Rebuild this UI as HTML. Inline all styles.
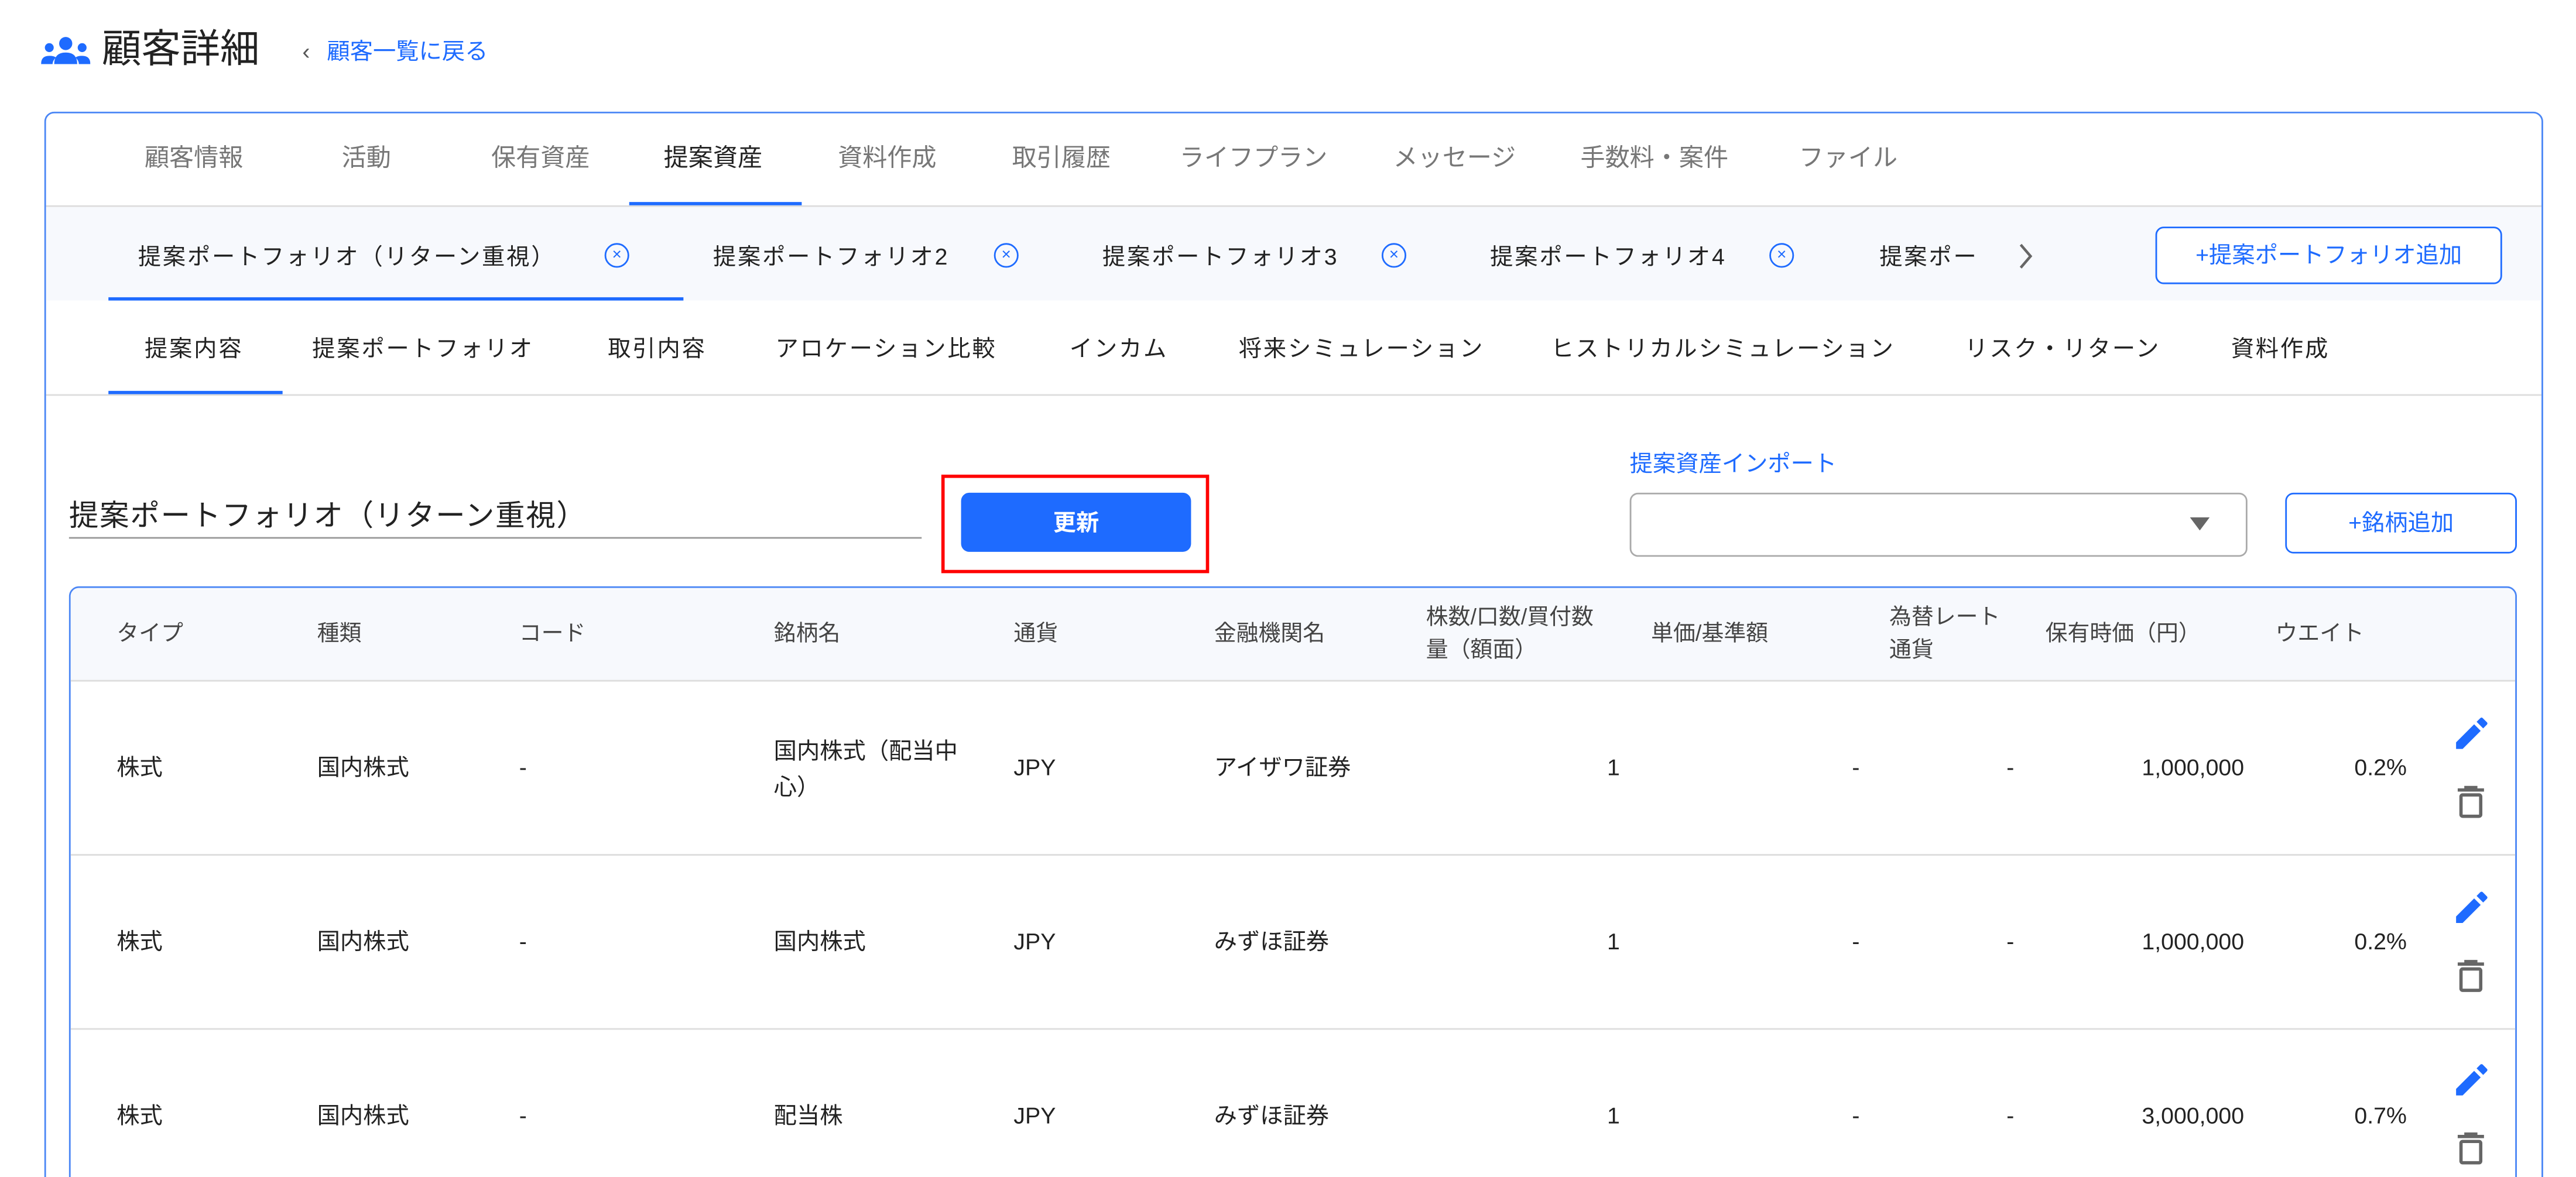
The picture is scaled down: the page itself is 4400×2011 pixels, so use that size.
<!DOCTYPE html>
<html><head><meta charset="utf-8">
<style>
html,body{margin:0;padding:0;background:#fff;width:4400px;height:2011px;overflow:hidden}
#w{position:absolute;left:0;top:0;width:1568px;height:716.6px;overflow:hidden;transform:scale(2.80612);transform-origin:0 0;font-family:"Liberation Sans","Noto Sans CJK JP",sans-serif;color:#222}
.a{position:absolute;white-space:nowrap;line-height:20px}
.t{font-size:15px;color:#777}
.s{font-size:14px;color:#222;letter-spacing:1px}
.h{font-size:13.5px;color:#444}
.c{font-size:14px;color:#222}
.r{text-align:right}
.blue{color:#1e6bff}
.ln{position:absolute}
.x{position:absolute;width:13px;height:13px;border:1.5px solid #1e6bff;border-radius:50%;color:#1e6bff;font-size:10px;line-height:13px;text-align:center}
</style></head><body><div id="w">
<svg class="ln" style="left:25px;top:22px" width="30" height="18" viewBox="0 0 30 18">
<circle cx="15" cy="4.5" r="4" fill="#1e6bff"/><circle cx="5" cy="7" r="2.7" fill="#1e6bff"/><circle cx="25" cy="7" r="2.7" fill="#1e6bff"/>
<path d="M8 17 q0-7 7-7 q7 0 7 7z" fill="#1e6bff"/><path d="M0 17 q0-5 5-5 q3 0 4 1 q-2 2-2 4z" fill="#1e6bff"/><path d="M30 17 q0-5-5-5 q-3 0-4 1 q2 2 2 4z" fill="#1e6bff"/></svg>
<div class="a" style="left:62px;top:16px;font-size:24px;line-height:30px;color:#222">顧客詳細</div>
<div class="a" style="left:184px;top:21px;font-size:14px;color:#555">‹</div>
<div class="a blue" style="left:199px;top:21px;font-size:14px">顧客一覧に戻る</div>
<div class="ln" style="left:27px;top:68px;width:1519px;height:700px;border:1px solid #4a86f5;border-radius:6px"></div>
<div class="a t" style="left:88px;top:87px">顧客情報</div>
<div class="a t" style="left:208px;top:87px">活動</div>
<div class="a t" style="left:299px;top:87px">保有資産</div>
<div class="a t" style="left:404px;top:87px;color:#222">提案資産</div>
<div class="a t" style="left:510px;top:87px">資料作成</div>
<div class="a t" style="left:616px;top:87px">取引履歴</div>
<div class="a t" style="left:718px;top:87px">ライフプラン</div>
<div class="a t" style="left:848px;top:87px">メッセージ</div>
<div class="a t" style="left:962px;top:87px">手数料・案件</div>
<div class="a t" style="left:1095px;top:87px">ファイル</div>
<div class="ln" style="left:28px;top:125px;width:1519px;height:1px;background:#ddd"></div>
<div class="ln" style="left:383px;top:123px;width:105px;height:2px;background:#1e6bff"></div>
<div class="ln" style="left:28px;top:126px;width:1519px;height:57px;background:#f7f9fd"></div>
<div class="a s" style="left:84px;top:146px">提案ポートフォリオ（リターン重視）</div><div class="x" style="left:368px;top:148px">×</div>
<div class="a s" style="left:434px;top:146px">提案ポートフォリオ2</div><div class="x" style="left:605px;top:148px">×</div>
<div class="a s" style="left:671px;top:146px">提案ポートフォリオ3</div><div class="x" style="left:841px;top:148px">×</div>
<div class="a s" style="left:907px;top:146px">提案ポートフォリオ4</div><div class="x" style="left:1077px;top:148px">×</div>
<div class="a s" style="left:1144px;top:146px">提案ポー</div>
<svg class="ln" style="left:1228px;top:147px" width="10" height="18"><path d="M2 2l6 7-6 7" stroke="#666" stroke-width="1.6" fill="none"/></svg>
<div class="ln" style="left:66px;top:181px;width:350px;height:2px;background:#1e6bff"></div>
<div class="ln blue" style="left:1312px;top:138px;width:209px;height:33px;border:1px solid #1e6bff;border-radius:5px;background:#fff;font-size:14px;line-height:33px;text-align:center">+提案ポートフォリオ追加</div>
<div class="a s" style="left:88px;top:202px">提案内容</div>
<div class="a s" style="left:190px;top:202px">提案ポートフォリオ</div>
<div class="a s" style="left:370px;top:202px">取引内容</div>
<div class="a s" style="left:472px;top:202px">アロケーション比較</div>
<div class="a s" style="left:651px;top:202px">インカム</div>
<div class="a s" style="left:754px;top:202px">将来シミュレーション</div>
<div class="a s" style="left:944px;top:202px">ヒストリカルシミュレーション</div>
<div class="a s" style="left:1196px;top:202px">リスク・リターン</div>
<div class="a s" style="left:1358px;top:202px">資料作成</div>
<div class="ln" style="left:28px;top:240px;width:1519px;height:1px;background:#ddd"></div>
<div class="ln" style="left:66px;top:238px;width:106px;height:2px;background:#1e6bff"></div>
<div class="a" style="left:42px;top:302px;font-size:18px;line-height:24px;color:#222;letter-spacing:0.6px">提案ポートフォリオ（リターン重視）</div>
<div class="ln" style="left:42px;top:327px;width:519px;height:1px;background:#999"></div>
<div class="ln" style="left:573px;top:289px;width:159px;height:56px;border:2.5px solid #f00"></div>
<div class="ln" style="left:585px;top:300px;width:140px;height:36px;background:#1e6bff;border-radius:5px;color:#fff;font-size:14px;line-height:36px;text-align:center;font-weight:bold">更新</div>
<div class="a blue" style="left:992px;top:272px;font-size:14px">提案資産インポート</div>
<div class="ln" style="left:992px;top:300px;width:374px;height:37px;border:1px solid #aaa;border-radius:5px"></div>
<svg class="ln" style="left:1333px;top:315px" width="12" height="8"><path d="M0 0h12L6 8z" fill="#666"/></svg>
<div class="ln blue" style="left:1391px;top:300px;width:139px;height:35px;border:1px solid #1e6bff;border-radius:5px;font-size:14px;line-height:35px;text-align:center">+銘柄追加</div>
<div class="ln" style="left:42px;top:357px;width:1488px;height:400px;border:1px solid #4a86f5;border-radius:6px;overflow:hidden"><div style="height:56px;background:#f7f9fd;border-bottom:1.5px solid #ddd"></div></div>
<div class="a h" style="left:71px;top:376px">タイプ</div>
<div class="a h" style="left:193px;top:376px">種類</div>
<div class="a h" style="left:316px;top:376px">コード</div>
<div class="a h" style="left:471px;top:376px">銘柄名</div>
<div class="a h" style="left:617px;top:376px">通貨</div>
<div class="a h" style="left:739px;top:376px">金融機関名</div>
<div class="a h" style="left:868px;top:366px">株数/口数/買付数<br>量（額面）</div>
<div class="a h" style="left:1005px;top:376px">単価/基準額</div>
<div class="a h" style="left:1150px;top:366px">為替レート<br>通貨</div>
<div class="a h" style="left:1245px;top:376px">保有時価（円）</div>
<div class="a h" style="left:1385px;top:376px">ウエイト</div>
<div class="ln" style="left:43px;top:520px;width:1488px;height:1px;background:#ddd"></div>
<div class="ln" style="left:43px;top:626px;width:1488px;height:1px;background:#ddd"></div>
<div class="a c" style="left:71px;top:457px">株式</div>
<div class="a c" style="left:193px;top:457px">国内株式</div>
<div class="a c" style="left:316px;top:457px">-</div>
<div class="a c" style="left:471px;top:446px;line-height:22px">国内株式（配当中<br>心）</div>
<div class="a c" style="left:617px;top:457px">JPY</div>
<div class="a c" style="left:739px;top:457px">アイザワ証券</div>
<div class="a c r" style="left:900px;width:86px;top:457px">1</div>
<div class="a c r" style="left:1100px;width:32px;top:457px">-</div>
<div class="a c r" style="left:1195px;width:31px;top:457px">-</div>
<div class="a c r" style="left:1260px;width:106px;top:457px">1,000,000</div>
<div class="a c r" style="left:1400px;width:65px;top:457px">0.2%</div>
<div class="a c" style="left:71px;top:563px">株式</div>
<div class="a c" style="left:193px;top:563px">国内株式</div>
<div class="a c" style="left:316px;top:563px">-</div>
<div class="a c" style="left:471px;top:563px">国内株式</div>
<div class="a c" style="left:617px;top:563px">JPY</div>
<div class="a c" style="left:739px;top:563px">みずほ証券</div>
<div class="a c r" style="left:900px;width:86px;top:563px">1</div>
<div class="a c r" style="left:1100px;width:32px;top:563px">-</div>
<div class="a c r" style="left:1195px;width:31px;top:563px">-</div>
<div class="a c r" style="left:1260px;width:106px;top:563px">1,000,000</div>
<div class="a c r" style="left:1400px;width:65px;top:563px">0.2%</div>
<div class="a c" style="left:71px;top:669px">株式</div>
<div class="a c" style="left:193px;top:669px">国内株式</div>
<div class="a c" style="left:316px;top:669px">-</div>
<div class="a c" style="left:471px;top:669px">配当株</div>
<div class="a c" style="left:617px;top:669px">JPY</div>
<div class="a c" style="left:739px;top:669px">みずほ証券</div>
<div class="a c r" style="left:900px;width:86px;top:669px">1</div>
<div class="a c r" style="left:1100px;width:32px;top:669px">-</div>
<div class="a c r" style="left:1195px;width:31px;top:669px">-</div>
<div class="a c r" style="left:1260px;width:106px;top:669px">3,000,000</div>
<div class="a c r" style="left:1400px;width:65px;top:669px">0.7%</div>
<svg class="ln" style="left:1493px;top:434px" width="24" height="24" viewBox="0 0 24 24"><path d="M2 18v4h4L17 11l-4-4z M14.5 5.5l4 4 2.3-2.3a1 1 0 0 0 0-1.4l-2.6-2.6a1 1 0 0 0-1.4 0z" fill="#1e6bff"/></svg>
<svg class="ln" style="left:1494px;top:477px" width="20" height="22" viewBox="0 0 20 22"><path d="M2 4h16M7 4V2.5h6V4" stroke="#666" stroke-width="2" fill="none"/><rect x="4" y="7" width="12" height="13" rx="1" stroke="#666" stroke-width="2" fill="none"/></svg>
<svg class="ln" style="left:1493px;top:540px" width="24" height="24" viewBox="0 0 24 24"><path d="M2 18v4h4L17 11l-4-4z M14.5 5.5l4 4 2.3-2.3a1 1 0 0 0 0-1.4l-2.6-2.6a1 1 0 0 0-1.4 0z" fill="#1e6bff"/></svg>
<svg class="ln" style="left:1494px;top:583px" width="20" height="22" viewBox="0 0 20 22"><path d="M2 4h16M7 4V2.5h6V4" stroke="#666" stroke-width="2" fill="none"/><rect x="4" y="7" width="12" height="13" rx="1" stroke="#666" stroke-width="2" fill="none"/></svg>
<svg class="ln" style="left:1493px;top:645px" width="24" height="24" viewBox="0 0 24 24"><path d="M2 18v4h4L17 11l-4-4z M14.5 5.5l4 4 2.3-2.3a1 1 0 0 0 0-1.4l-2.6-2.6a1 1 0 0 0-1.4 0z" fill="#1e6bff"/></svg>
<svg class="ln" style="left:1494px;top:688px" width="20" height="22" viewBox="0 0 20 22"><path d="M2 4h16M7 4V2.5h6V4" stroke="#666" stroke-width="2" fill="none"/><rect x="4" y="7" width="12" height="13" rx="1" stroke="#666" stroke-width="2" fill="none"/></svg>
</div></body></html>
